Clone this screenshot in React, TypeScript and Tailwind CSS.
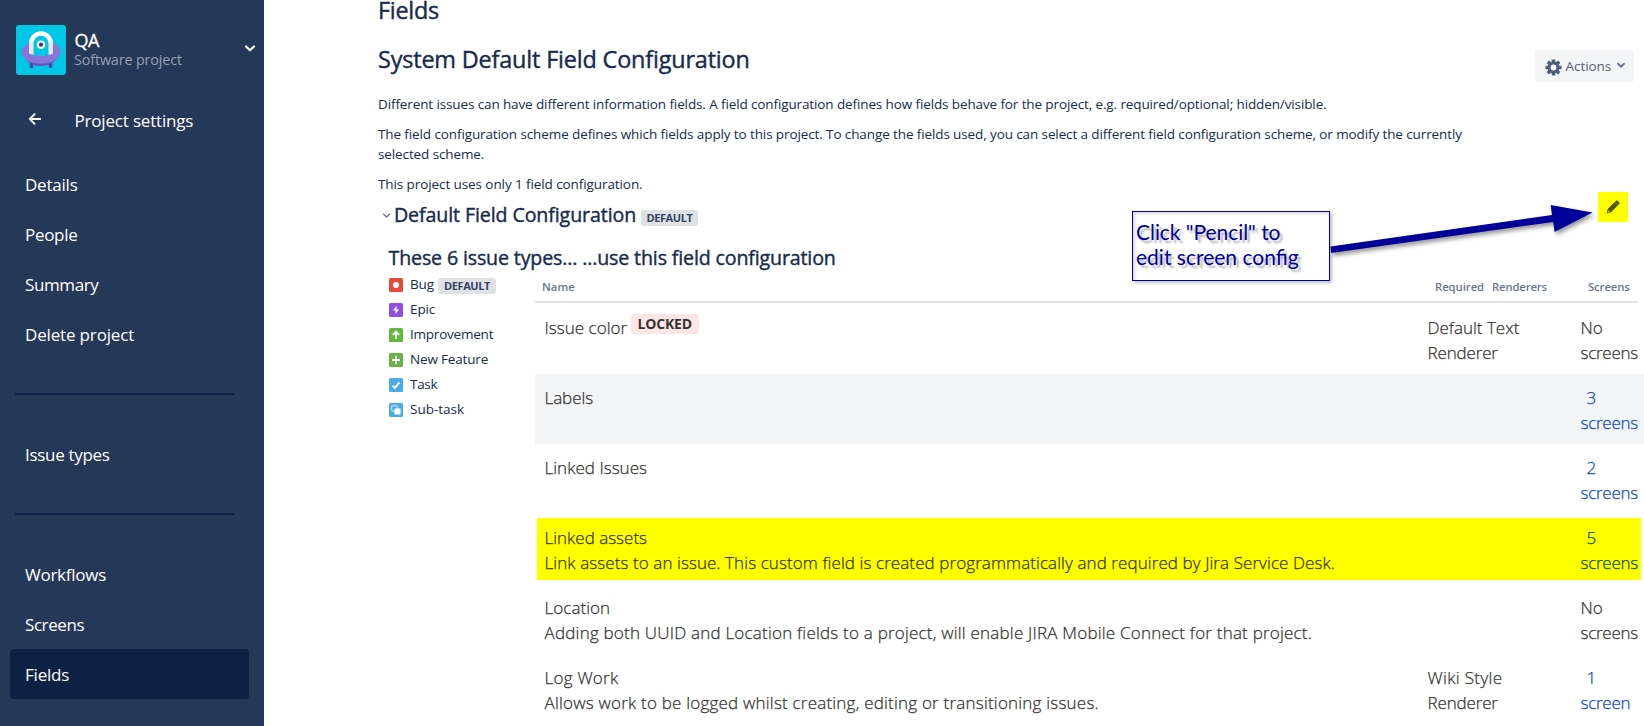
import type { ReactNode } from "react";

type NavEntry = { label: string; spacing: string; active?: boolean };

const navGroups: NavEntry[][] = [
  [
    { label: "Details", spacing: "tracking-[-0.22px]" },
    { label: "People", spacing: "tracking-[-0.3px]" },
    { label: "Summary", spacing: "tracking-[-0.38px]" },
    { label: "Delete project", spacing: "tracking-[-0.16px]" },
  ],
  [{ label: "Issue types", spacing: "tracking-[-0.31px]" }],
  [
    { label: "Workflows", spacing: "tracking-[-0.26px]" },
    { label: "Screens", spacing: "tracking-[-0.42px]" },
    { label: "Fields", spacing: "tracking-[-0.2px]", active: true },
  ],
];

function ProjectAvatar() {
  return (
    <svg width="50" height="50" viewBox="0 0 50 50" className="shrink-0 rounded-[3px]">
      <rect width="50" height="50" fill="#00c7e6" />
      <rect x="13.7" y="36" width="3.4" height="7" rx="1" fill="#5243aa" />
      <rect x="32.9" y="36" width="3.4" height="7" rx="1" fill="#5243aa" />
      <ellipse cx="25" cy="29" rx="17" ry="12" fill="#6554c0" />
      <ellipse cx="25" cy="27" rx="19.7" ry="11.6" fill="#8777d9" />
      <path d="M13 16V28.5C16 30.8 34 30.8 37 28.5V16Z" fill="#eae6ff" />
      <path d="M13 16.5V18.2a12 12 0 0 1 24 0V16.5Z" fill="#fff" />
      <path d="M17.5 30V18.2a7.5 7.5 0 0 1 15 0V30C28 30.8 22 30.8 17.5 30Z" fill="#00c7e6" />
      <circle cx="25" cy="19.7" r="4.3" fill="#fff" />
      <circle cx="25" cy="19.7" r="2.1" fill="#403294" />
    </svg>
  );
}

function Sidebar() {
  return (
    <aside className="h-full w-[264px] shrink-0 bg-[#253858] text-white">
      <div className="flex pt-[25px] pl-4">
        <ProjectAvatar />
        <div className="flex w-[178px] flex-col pt-[6px] pl-[8px] whitespace-nowrap">
          <span className="pl-[0.6px] text-[18px] leading-[19px] tracking-[-0.5px] [-webkit-text-stroke:0.3px_currentColor]">QA</span>
          <span className="text-[14.3px] leading-[20px] tracking-[-0.11px] text-[#97a0af]">Software project</span>
        </div>
        <svg width="12" height="9" viewBox="0 0 12 9" className="mt-[19px] shrink-0" fill="none" stroke="#fff" strokeWidth="2.2" strokeLinecap="round" strokeLinejoin="round">
          <path d="M2 2.5 6 6.3 10 2.5" />
        </svg>
      </div>
      <div className="mt-[20px] flex h-[50px] items-center pl-[28px]">
        <svg width="14" height="12" viewBox="0 0 14 12" className="-mt-[3px]" fill="none" stroke="#fff" strokeWidth="1.8" strokeLinecap="round" strokeLinejoin="round">
          <path d="M12.2 6H2M6.6 1.2 1.8 6l4.8 4.8" />
        </svg>
        <span className="pl-[32.5px] text-[17px] leading-[51px] tracking-[-0.18px]">Project settings</span>
      </div>
      <nav className="mt-[14px]">
        {navGroups.map((group, index) => (
          <div key={index}>
            {index > 0 && <hr className="mt-[34px] mb-[34px] ml-[15px] h-[2px] w-[219px] border-0 bg-[#0c1f47]" />}
            {group.map((entry) => (
              <div
                key={entry.label}
                className={`ml-[10px] h-[50px] w-[239px] rounded-[4px] pl-[15px] text-[17px] leading-[52px] ${entry.spacing} ${entry.active ? "bg-[#0d2144]" : ""}`}
              >
                {entry.label}
              </div>
            ))}
          </div>
        ))}
      </nav>
    </aside>
  );
}

function DefaultBadge({ className }: { className: string }) {
  return (
    <span className={`flex h-4 items-center justify-center rounded-[3px] bg-[#dfe1e6] text-[11px] leading-4 font-bold tracking-[-0.4px] text-[#344563] ${className}`}>
      DEFAULT
    </span>
  );
}

function TypeIcon({ fill, children }: { fill: string; children: ReactNode }) {
  return (
    <svg width="14" height="14" viewBox="0 0 14 14" className="shrink-0">
      <rect width="14" height="14" rx="1.5" fill={fill} />
      {children}
    </svg>
  );
}

const issueTypes = [
  { label: "Bug", spacing: "tracking-[-0.1px]", fill: "#e5493a", glyph: <circle cx="7" cy="7" r="3" fill="#fff" /> },
  { label: "Epic", spacing: "tracking-[-0.1px]", fill: "#904ee2", glyph: <path d="M7.6 2.8 4 7.6h2.6L6.4 11.2 10 6.4H7.6Z" fill="#fff" /> },
  {
    label: "Improvement",
    spacing: "tracking-[-0.22px]",
    fill: "#63ba3c",
    glyph: <path d="M7 11V4M3.8 6.8 7 3.6l3.2 3.2" fill="none" stroke="#fff" strokeWidth="1.9" />,
  },
  { label: "New Feature", spacing: "tracking-[-0.17px]", fill: "#67b546", glyph: <path d="M7 3v8M3 7h8" stroke="#fff" strokeWidth="2" /> },
  { label: "Task", spacing: "tracking-[-0.3px]", fill: "#4bade8", glyph: <path d="M3.6 7.6 5.8 9.8 10.4 4.4" fill="none" stroke="#fff" strokeWidth="1.9" /> },
  {
    label: "Sub-task",
    spacing: "tracking-[0px]",
    fill: "#4bade8",
    glyph: (
      <>
        <rect x="2.6" y="2.6" width="5.6" height="5.6" rx="1.2" fill="none" stroke="#b7def6" strokeWidth="1.2" />
        <rect x="5.4" y="5.4" width="6.2" height="6.2" rx="1" fill="#fff" />
      </>
    ),
  },
];

type FieldRow = {
  name: string;
  locked?: boolean;
  description?: string;
  nameSpacing: string;
  descriptionSpacing?: string;
  renderer?: [string, string];
  screens: [string, string];
  striped?: boolean;
  highlighted?: boolean;
};

const rows: FieldRow[] = [
  { name: "Issue color", nameSpacing: "tracking-[0.03px]", locked: true, renderer: ["Default Text", "Renderer"], screens: ["No", "screens"] },
  { name: "Labels", nameSpacing: "tracking-[-0.05px]", screens: ["3", "screens"], striped: true },
  { name: "Linked Issues", nameSpacing: "tracking-[0.03px]", screens: ["2", "screens"] },
  {
    name: "Linked assets",
    nameSpacing: "tracking-[0px]",
    description: "Link assets to an issue. This custom field is created programmatically and required by Jira Service Desk.",
    descriptionSpacing: "tracking-[0.085px]",
    screens: ["5", "screens"],
    highlighted: true,
  },
  {
    name: "Location",
    nameSpacing: "tracking-[0.05px]",
    description: "Adding both UUID and Location fields to a project, will enable JIRA Mobile Connect for that project.",
    descriptionSpacing: "tracking-[0.21px]",
    screens: ["No", "screens"],
  },
  {
    name: "Log Work",
    nameSpacing: "tracking-[0.25px]",
    description: "Allows work to be logged whilst creating, editing or transitioning issues.",
    descriptionSpacing: "tracking-[0.21px]",
    renderer: ["Wiki Style", "Renderer"],
    screens: ["1", "screen"],
  },
];

function ConfigRow({ row }: { row: FieldRow }) {
  const linked = row.screens[0] !== "No";
  const link = row.highlighted ? "text-[#005200]" : "text-[#0747d0]";
  return (
    <div className={`h-[70px] w-[1109px] ${row.striped ? "bg-[#f4f5f7]" : ""} ${row.highlighted ? "py-1 pr-[3px] pl-[2px]" : ""}`}>
      <div
        className={`flex h-full text-[17px] leading-[25px] font-light whitespace-nowrap [-webkit-text-stroke:0.25px_currentColor] ${
          row.highlighted ? "bg-[#ffff00] pt-[6.5px] pl-[7.5px] text-[#333300]" : "pt-[10.5px] pl-[9.5px] text-[#333]"
        }`}
      >
        <div className="w-[883px] shrink-0">
          <div className={`flex ${row.nameSpacing}`}>
            {row.name}
            {row.locked && (
              <span className="-mt-[0.5px] ml-[3.5px] flex h-5 w-[68px] items-center justify-center rounded-[4px] bg-[#ffe6e6] text-[14px] leading-5 font-bold tracking-[-0.16px] text-[#333] [-webkit-text-stroke:0]">
                LOCKED
              </span>
            )}
          </div>
          {row.description && <div className={row.descriptionSpacing}>{row.description}</div>}
        </div>
        <div className="w-[153px] shrink-0">
          {row.renderer && (
            <>
              <div className={row.renderer[0] === "Wiki Style" ? "tracking-[0.35px]" : "tracking-[0px]"}>{row.renderer[0]}</div>
              <div className="tracking-[-0.15px]">{row.renderer[1]}</div>
            </>
          )}
        </div>
        <div className={linked ? link : ""}>
          <div className={linked ? "pl-[6px]" : ""}>{row.screens[0]}</div>
          <div className="tracking-[-0.25px]">{row.screens[1]}</div>
        </div>
      </div>
    </div>
  );
}

function ActionsButton() {
  return (
    <button className="mt-[50px] mr-[10px] flex h-8 w-[99px] shrink-0 items-center rounded-[3px] bg-[#f4f5f7] pl-[10px] text-[13.5px] text-[#505f79]">
      <svg width="17" height="17" viewBox="0 0 17 17" className="mt-[2px] shrink-0">
        <g fill="#505f79">
          <rect x="6.7" y="0.4" width="3.6" height="16.2" rx="0.8" />
          <rect x="6.7" y="0.4" width="3.6" height="16.2" rx="0.8" transform="rotate(45 8.5 8.5)" />
          <rect x="6.7" y="0.4" width="3.6" height="16.2" rx="0.8" transform="rotate(90 8.5 8.5)" />
          <rect x="6.7" y="0.4" width="3.6" height="16.2" rx="0.8" transform="rotate(135 8.5 8.5)" />
          <circle cx="8.5" cy="8.5" r="6" />
        </g>
        <circle cx="8.5" cy="8.5" r="2.9" fill="#f4f5f7" />
      </svg>
      <span className="pl-[3.5px] leading-8 tracking-[-0.05px]">Actions</span>
      <svg width="10" height="7" viewBox="0 0 10 7" className="-mt-[2px] ml-[5px]" fill="none" stroke="#6b778c" strokeWidth="2" strokeLinecap="round" strokeLinejoin="round">
        <path d="M2 1.8 5 4.8 8 1.8" />
      </svg>
    </button>
  );
}

function Annotation() {
  return (
    <>
      <div className="absolute top-[211px] left-[1132px] h-[70px] w-[198px] border border-[#000099] bg-white pt-[7px] pl-[3px] font-[Lato,sans-serif] text-[21px] leading-[25px] whitespace-nowrap text-[#000099] shadow-[2px_2px_3px_rgba(0,0,0,0.25),inset_2px_2px_3px_rgba(0,0,0,0.15)] [text-shadow:3px_3px_2px_rgba(0,0,0,0.3)]">
        <div className="tracking-[-0.05px]">Click "Pencil" to</div>
        <div>edit screen config</div>
      </div>
      <svg className="absolute top-[190px] left-[1325px] drop-shadow-[2px_3px_2px_rgba(0,0,0,0.4)]" width="275" height="75" viewBox="0 0 275 75">
        <path d="M5.5 56.4 227 25 225.6 15 267.6 22.6 229.6 42 228.2 32 6.2 63Z" fill="#000099" />
      </svg>
      <div className="absolute top-[192px] left-[1598px] flex h-[30px] w-[30px] items-center justify-center bg-[#ffff00]">
        <svg width="14" height="14" viewBox="0 0 14 14" fill="#505500">
          <path d="M0.6 13.4 1.7 9 8 2.7 11.3 6 5 12.3ZM9 1.8 10 .8Q10.9 0 11.8.8L13.2 2.2Q14 3.1 13.2 4L12.2 5Z" />
          <path d="M8 2.7 9 1.8 12.2 5 11.3 6Z" />
          <path d="M1.5 12.5 2.2 10.2 3.8 11.8Z" fill="#d8dc00" />
        </svg>
      </div>
    </>
  );
}

export default function App() {
  return (
    <div className="relative flex h-[726px] w-[1644px] overflow-hidden bg-white font-['Open_Sans',sans-serif] text-[#172b4d]">
      <Sidebar />
      <main className="min-w-0 flex-1">
        <div className="flex h-[202px] justify-between pl-[114px]">
          <div className="w-[1100px]">
            <h1 className="text-[23.4px] leading-5 tracking-[-0.25px] [-webkit-text-stroke:0.4px_currentColor]">Fields</h1>
            <h2 className="mt-[25px] text-[23.4px] leading-7 tracking-[-0.16px] [-webkit-text-stroke:0.4px_currentColor]">System Default Field Configuration</h2>
            <div className="mt-[21px] flex flex-col gap-[10px] text-[13.5px] leading-5">
              <p className="tracking-[-0.117px]">
                Different issues can have different information fields. A field configuration defines how fields behave for the project, e.g. required/optional; hidden/visible.
              </p>
              <p className="tracking-[-0.11px]">
                The field configuration scheme defines which fields apply to this project. To change the fields used, you can select a different field configuration scheme, or modify the currently selected scheme.
              </p>
              <p className="tracking-[-0.09px]">This project uses only 1 field configuration.</p>
            </div>
          </div>
          <ActionsButton />
        </div>

        <div className="flex h-6 pl-[118px]">
          <svg width="9" height="6" viewBox="0 0 9 6" className="mt-[11px]" fill="none" stroke="#6b778c" strokeWidth="1.5" strokeLinecap="round" strokeLinejoin="round">
            <path d="M1.6 1.2 4.6 4 7.6 1.2" />
          </svg>
          <h3 className="w-[250px] pl-[3px] text-[19.6px] leading-[25px] tracking-[-0.1px] whitespace-nowrap [-webkit-text-stroke:0.4px_currentColor]">Default Field Configuration</h3>
          <DefaultBadge className="mt-2 w-[57px]" />
        </div>
        <h3 className="mt-[19px] h-6 pl-[124.5px] text-[19.6px] leading-[25px] tracking-[-0.14px] [-webkit-text-stroke:0.4px_currentColor]">These 6 issue types... ...use this field configuration</h3>

        <div className="flex">
          <ul className="w-[271px] shrink-0 pt-[3px] pl-[125px] text-[13.5px] leading-[25px]">
            {issueTypes.map((type) => (
              <li key={type.label} className="flex h-[25px] items-center">
                <TypeIcon fill={type.fill}>{type.glyph}</TypeIcon>
                <span className={`pl-[7px] whitespace-nowrap ${type.spacing}`}>{type.label}</span>
                {type.label === "Bug" && <DefaultBadge className="mt-[2px] ml-[4px] w-[58px]" />}
              </li>
            ))}
          </ul>
          <div>
            <div className="mb-px flex h-[34px] w-[1103px] border-b-2 border-[#dfe1e6] pt-[2px] pl-[7px] text-[11.3px] leading-8 font-semibold text-[#6b778c]">
              <span className="w-[893px] shrink-0">Name</span>
              <span className="w-[57px] shrink-0 tracking-[-0.05px]">Required</span>
              <span className="w-[96px] shrink-0 tracking-[-0.15px]">Renderers</span>
              <span className="tracking-[-0.1px]">Screens</span>
            </div>
            {rows.map((row) => (
              <ConfigRow key={row.name} row={row} />
            ))}
          </div>
        </div>
      </main>
      <Annotation />
    </div>
  );
}
